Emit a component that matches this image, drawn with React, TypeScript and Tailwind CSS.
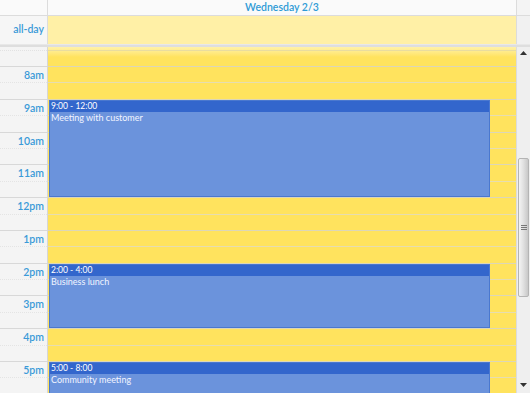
import React from "react";

const HOURS = ["8am", "9am", "10am", "11am", "12pm", "1pm", "2pm", "3pm", "4pm", "5pm", ""];

function LabelColumn() {
  return (
    <div className="w-[48px] shrink-0 border-r border-[#d6d6d6] bg-[#f4f4f4]">
      <div className="h-[3.6px] box-border border-b border-dotted border-[#e2e2e2]" />
      <div className="h-[16.4px] box-border border-b border-[#d8d8d8]" />
      {HOURS.map((h, i) => (
        <div key={i}>
          <div className="h-[16.4px] box-border border-b border-dotted border-[#e4e4e4] flex justify-end items-start pr-[3px] pt-[1px] text-[10.5px] leading-[14px] font-semibold text-[#3a9ad8]">
            {h}
          </div>
          <div className="h-[16.4px] box-border border-b border-[#d8d8d8]" />
        </div>
      ))}
    </div>
  );
}

function Grid() {
  return (
    <div>
      <div className="h-[3.6px] box-border border-b border-[#e8dca0]" />
      <div className="h-[16.4px] box-border border-b border-[#dcd6b8]" />
      {HOURS.map((_, i) => (
        <div key={i}>
          <div className="h-[16.4px] box-border border-b border-[#e6ddb0]" />
          <div className="h-[16.4px] box-border border-b border-[#dcd6b8]" />
        </div>
      ))}
    </div>
  );
}

function Event({ top, height, time, title }: { top: number; height: number; time: string; title: string }) {
  return (
    <div
      className="absolute left-[1px] w-[441px] border border-[#4a78cf] bg-[#6b93dc] text-white"
      style={{ top, height }}
    >
      <div className="h-[11px] bg-[#3366cc] text-[8.5px] leading-[11px] pl-[1px]">{time}</div>
      <div className="text-[9px] leading-[12px] pl-[1px] text-[#f2f5ff]">{title}</div>
    </div>
  );
}

export default function App() {
  return (
    <div
      className="w-[530px] h-[393px] overflow-hidden bg-white"
      style={{ fontFamily: "Lato, 'Liberation Sans', sans-serif" }}
    >
      <div className="flex h-[16px] border-b border-[#dcdcdc] bg-[#fafafa]">
        <div className="w-[48px] shrink-0 border-r border-[#dcdcdc]" />
        <div className="flex-1 text-center text-[10.5px] leading-[15px] font-semibold text-[#2e9ad6]">Wednesday 2/3</div>
        <div className="w-[14px] shrink-0 border-l border-[#dcdcdc] bg-[#f4f4f4]" />
      </div>
      <div className="flex h-[28px]">
        <div className="w-[48px] shrink-0 border-r border-[#dcdcdc] bg-[#f6f6f6] flex items-center justify-end pr-[3px] text-[10.5px] font-semibold text-[#3a9ad8]">
          all-day
        </div>
        <div className="flex-1 bg-[#fff0a6]" />
        <div className="w-[14px] shrink-0 border-l border-[#dcdcdc] bg-[#f1f1f1]" />
      </div>
      <div className="h-[3px] bg-[#dedede] border-t border-[#e8e8e8]" />
      <div className="flex h-[346px] overflow-hidden">
        <LabelColumn />
        <div className="relative flex-1 bg-[#ffe35e] overflow-hidden">
          <div className="absolute inset-x-0 top-0 h-[10px] bg-gradient-to-b from-[#fff2a8] to-[#ffe35e]" />
          <div className="relative">
            <Grid />
          </div>
          <Event top={52.8} height={97} time="9:00 - 12:00" title="Meeting with customer" />
          <Event top={216.8} height={64} time="2:00 - 4:00" title="Business lunch" />
          <Event top={315.2} height={80} time="5:00 - 8:00" title="Community meeting" />
        </div>
        <div className="relative w-[14px] shrink-0 border-l border-[#dcdcdc] bg-[#efefef]">
          <svg className="absolute left-[3px] top-[4px]" width="7" height="5" viewBox="0 0 7 5">
            <path d="M0 4 L3.5 0 L7 4 Z" fill="#333" />
          </svg>
          <div className="absolute left-[1px] right-[1px] top-[111px] h-[139px] rounded-[2px] border border-[#b4b4b4] bg-gradient-to-r from-[#f4f4f4] via-[#e0e0e0] to-[#c8c8c8] flex items-center justify-center">
            <div className="flex flex-col gap-[1px]">
              <div className="w-[6px] h-[1px] bg-[#777]" />
              <div className="w-[6px] h-[1px] bg-[#777]" />
              <div className="w-[6px] h-[1px] bg-[#777]" />
            </div>
          </div>
          <svg className="absolute left-[3px] bottom-[5px]" width="7" height="5" viewBox="0 0 7 5">
            <path d="M0 0 L7 0 L3.5 4 Z" fill="#333" />
          </svg>
        </div>
      </div>
    </div>
  );
}
